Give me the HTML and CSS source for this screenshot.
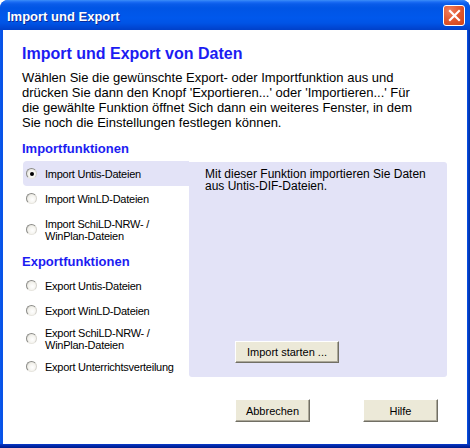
FILE: index.html
```html
<!DOCTYPE html>
<html lang="de">
<head>
<meta charset="utf-8">
<title>Import und Export</title>
<link rel="stylesheet" href="styles.css">
</head>
<body>
<div class="window">
  <div class="titlebar">
    <span class="title">Import und Export</span>
    <button class="close" aria-label="Schließen">
      <svg width="13" height="13" viewBox="0 0 13 13"><path d="M2 2 L11 11 M11 2 L2 11" stroke="#fff" stroke-width="2.2" stroke-linecap="square"/></svg>
    </button>
  </div>
  <div class="client">
    <h1 class="heading">Import und Export von Daten</h1>
    <p class="intro">Wählen Sie die gewünschte Export- oder Importfunktion aus und drücken Sie dann den Knopf 'Exportieren...' oder 'Importieren...' Für die gewählte Funktion öffnet Sich dann ein weiteres Fenster, in dem Sie noch die Einstellungen festlegen können.</p>
    <div class="main">
      <div class="choices">
        <h2 class="group">Importfunktionen</h2>
        <ul class="options import">
          <li class="option selected"><span class="radio checked"></span><span class="label">Import Untis-Dateien</span></li>
          <li class="option"><span class="radio"></span><span class="label">Import WinLD-Dateien</span></li>
          <li class="option tall"><span class="radio"></span><span class="label">Import SchiLD-NRW- /<br>WinPlan-Dateien</span></li>
        </ul>
        <h2 class="group export">Exportfunktionen</h2>
        <ul class="options">
          <li class="option"><span class="radio"></span><span class="label">Export Untis-Dateien</span></li>
          <li class="option"><span class="radio"></span><span class="label">Export WinLD-Dateien</span></li>
          <li class="option tall"><span class="radio"></span><span class="label">Export SchiLD-NRW- /<br>WinPlan-Dateien</span></li>
          <li class="option"><span class="radio"></span><span class="label">Export Unterrichtsverteilung</span></li>
        </ul>
      </div>
      <div class="panel">
        <p class="desc">Mit dieser Funktion importieren Sie Daten aus Untis-DIF-Dateien.</p>
        <button class="btn start">Import starten ...</button>
      </div>
    </div>
    <div class="actions">
      <button class="btn">Abbrechen</button>
      <button class="btn">Hilfe</button>
    </div>
  </div>
</div>
</body>
</html>
```

FILE: styles.css
```css
* { box-sizing: border-box; }
html, body { margin: 0; padding: 0; background: #fff; }
body { width: 470px; height: 448px; overflow: hidden; font-family: "Liberation Sans", Arial, sans-serif; }

.window {
  width: 470px;
  height: 448px;
  display: flex;
  flex-direction: column;
  background: linear-gradient(90deg, #0a5af0 0, #0750e2 2px, #0a56ee 3px, #0a56ee 467px, #0342d0 468px, #00309e 470px);
  border-radius: 8px 8px 0 0;
  padding: 0 3px 4px 3px;
  position: relative;
}
.window::after {
  content: "";
  position: absolute;
  left: 0; right: 0; bottom: 0;
  height: 4px;
  background: linear-gradient(#0a3ac8, #0024a0 60%, #001a88);
}

.titlebar {
  height: 30px;
  margin: 0 -3px;
  padding: 3px 5px 0 7px;
  display: flex;
  align-items: center;
  justify-content: space-between;
  border-radius: 8px 8px 0 0;
  background: linear-gradient(#3c8ef8 0, #1a6cf4 2px, #0a5ce9 4px, #0055e5 8px, #0058ec 18px, #0054e6 23px, #0048d6 27px, #0040c8 30px);
}
.title {
  color: #fff;
  font-weight: bold;
  font-size: 13px;
  line-height: 15px;
  text-shadow: 1px 1px 0 #0b2a9a;
}
.close {
  width: 22px;
  height: 21px;
  margin-top: -3px;
  padding: 0;
  border: 1px solid #fff;
  border-radius: 3px;
  background: radial-gradient(circle at 30% 25%, #ef8060 0, #e25a32 45%, #cf4216 100%);
  display: flex;
  align-items: center;
  justify-content: center;
}

.client {
  flex: 1;
  background: #fff;
  padding: 14px 0 0 19px;
  color: #000;
}
.heading {
  margin: 0;
  font-size: 16px;
  line-height: 19px;
  font-weight: bold;
  color: #1c1cf2;
}
.intro {
  margin: 7px 0 0 0;
  max-width: 405px;
  font-size: 13px;
  line-height: 15px;
}

.main {
  display: flex;
  margin-top: 11px;
}
.choices { width: 167px; }
.group {
  margin: 0;
  font-size: 13px;
  line-height: 16px;
  font-weight: bold;
  color: #1c1cf2;
}
.group.export { margin-top: 9px; }
.options {
  list-style: none;
  margin: 3px 0 0 0;
  padding: 0;
}
.options.import { margin-top: 4px; }
.option {
  height: 25px;
  margin-left: 1px;
  padding-left: 3px;
  display: flex;
  align-items: center;
  gap: 8px;
  font-size: 11px;
  letter-spacing: -0.25px;
  line-height: 12px;
}
.option.tall { height: 31px; }
.options.import .option.tall { margin-top: 3px; }
.option.selected {
  background: #e3e3f7;
  border-radius: 4px 0 0 4px;
}
.radio {
  flex: none;
  width: 11px;
  height: 11px;
  border-radius: 50%;
  border: 1px solid;
  border-color: #8c8c88 #d4d2cc #e8e6e0 #8c8c88;
  background: radial-gradient(circle at 60% 60%, #ffffff 0, #f4f3ee 50%, #d8d6ce 100%);
  display: flex;
  align-items: center;
  justify-content: center;
}
.radio.checked::after {
  content: "";
  width: 4px;
  height: 4px;
  border-radius: 50%;
  background: #000;
}

.panel {
  width: 258px;
  height: 215px;
  margin-top: 21px;
  background: #e3e3f7;
  border-radius: 0 3px 3px 3px;
  padding: 6px 0 14px 16px;
  display: flex;
  flex-direction: column;
  align-items: flex-start;
}
.desc {
  margin: 0;
  max-width: 230px;
  font-size: 12px;
  line-height: 12px;
}
.btn {
  font-family: "Liberation Sans", Arial, sans-serif;
  font-size: 11px;
  color: #000;
  background: #ece9d8;
  border: 1px solid;
  border-color: #fff #716f64 #716f64 #fff;
  box-shadow: inset -1px -1px 0 #aca899;
  padding: 0;
  width: 75px;
  height: 23px;
  border-radius: 0;
}
.btn.start {
  margin-top: auto;
  margin-left: 30px;
  width: 104px;
  height: 22px;
}
.actions {
  display: flex;
  gap: 53px;
  justify-content: flex-end;
  padding-right: 29px;
  margin-top: 20px;
}
```
